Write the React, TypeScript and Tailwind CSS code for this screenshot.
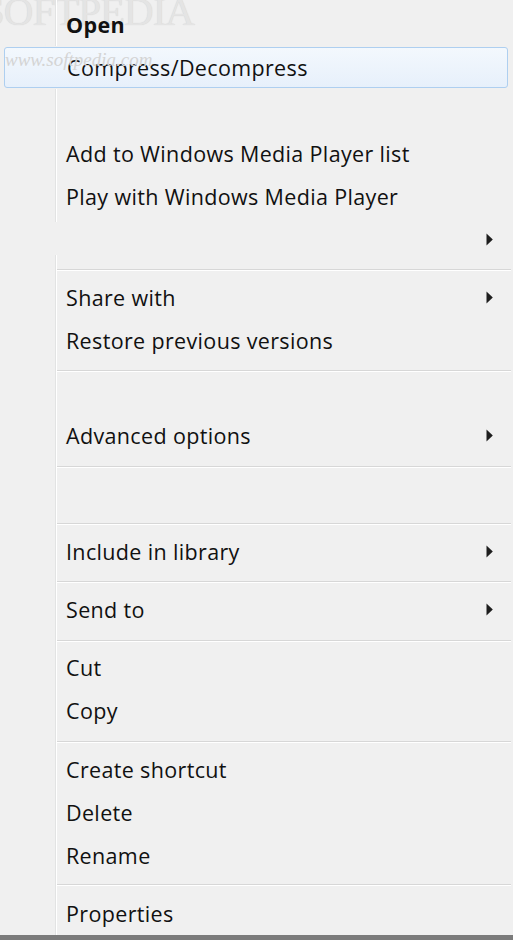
import React from 'react';

type Item = { kind: 'item'; label?: string; bold?: boolean; arrow?: boolean; active?: boolean; h?: string; noLine?: boolean };
type Row = Item | { kind: 'sep' };

const rows: Row[] = [
  { kind: 'item', label: 'Open', bold: true },
  { kind: 'item', label: 'Compress/Decompress', active: true },
  { kind: 'item' },
  { kind: 'item', label: 'Add to Windows Media Player list' },
  { kind: 'item', label: 'Play with Windows Media Player' },
  { kind: 'item', arrow: true, noLine: true, h: 'h-[42px]' },
  { kind: 'sep' },
  { kind: 'item', label: 'Share with', arrow: true },
  { kind: 'item', label: 'Restore previous versions' },
  { kind: 'sep' },
  { kind: 'item', label: 'Advanced options', arrow: true },
  { kind: 'sep' },
  { kind: 'item', h: 'h-[55px]' },
  { kind: 'sep' },
  { kind: 'item', label: 'Include in library', arrow: true },
  { kind: 'sep' },
  { kind: 'item', label: 'Send to', arrow: true },
  { kind: 'sep' },
  { kind: 'item', label: 'Cut' },
  { kind: 'item', label: 'Copy' },
  { kind: 'sep' },
  { kind: 'item', label: 'Create shortcut' },
  { kind: 'item', label: 'Delete' },
  { kind: 'item', label: 'Rename' },
  { kind: 'sep' },
  { kind: 'item', label: 'Properties' },
];

// the gray + white pair of lines that splits the icon gutter from the labels
const GutterLine = () => (
  <>
    <div className="w-px bg-[#e2e3e3]" />
    <div className="w-px bg-white" />
  </>
);

const Arrow = () => (
  <svg width="7" height="13" viewBox="0 0 7 13" className="mr-[18px]">
    <path d="M0.5 0.5 L6.8 6.5 L0.5 12.5 Z" fill="#1e1e1e" />
  </svg>
);

const Separator = () => (
  <div className="flex h-[2px]">
    <div className="w-[55px] shrink-0" />
    <GutterLine />
    <div className="flex flex-1 flex-col">
      <div className="h-px bg-[#d7d7d7]" />
      <div className="h-px bg-white" />
    </div>
  </div>
);

const Spacer: React.FC<{ h: string }> = ({ h }) => (
  <div className={`flex ${h}`}>
    <div className="w-[55px] shrink-0" />
    <GutterLine />
  </div>
);

const MenuItem: React.FC<{ row: Item }> = ({ row }) => {
  const h = row.h ?? 'h-[43px]';
  if (row.active) {
    return (
      <div className={`flex ${h} items-stretch py-px pl-[4px] pr-[3px]`}>
        <div className="flex flex-1 items-center rounded-[3px] border border-[#aecff0] bg-gradient-to-b from-[#f3f8fd] to-[#e7f0fb] pl-[62px]">
          <span className="text-[#111]">{row.label}</span>
        </div>
      </div>
    );
  }
  return (
    <div className={`flex ${h} items-stretch`}>
      <div className="w-[55px] shrink-0" />
      {row.noLine ? (
        <div className="flex w-[2px] flex-col">
          <div className="flex h-[4px]">
            <GutterLine />
          </div>
          <div className="flex-1" />
          <div className="flex h-[5px]">
            <GutterLine />
          </div>
        </div>
      ) : (
        <GutterLine />
      )}
      <div className="flex flex-1 items-center justify-between pl-[9px]">
        <span className={row.bold ? 'font-bold text-[#111]' : 'text-[#111]'}>{row.label ?? ''}</span>
        {row.arrow && <Arrow />}
      </div>
    </div>
  );
};

// extra space above some rows so each lands where the menu puts it
const gapsBefore: Record<number, string> = {
  6: 'h-[9px]',
  7: 'h-[5px]',
  9: 'h-[8px]',
  10: 'h-[42px]',
  11: 'h-[9px]',
  14: 'h-[5px]',
  15: 'h-[8px]',
  16: 'h-[5px]',
  17: 'h-[9px]',
  18: 'h-[4px]',
  20: 'h-[9px]',
  21: 'h-[5px]',
  24: 'h-[7px]',
  25: 'h-[6px]',
};

export default function App() {
  return (
    <div
      className="relative flex h-[940px] w-[513px] flex-col overflow-hidden bg-[#f0f0f0] text-[21.5px] leading-none tracking-[0.35px]"
      style={{ fontFamily: '"Open Sans", "Noto Sans", sans-serif' }}
    >
      {/* softpedia watermark */}
      <div className="pointer-events-none absolute left-[-18px] top-[-9px] select-none font-['Liberation_Serif',serif] text-[41px] tracking-[-1px] text-[#e4e4e4] [text-shadow:0_0_1px_#cfcfcf]">
        SOFTPEDIA
      </div>

      <div className="relative flex flex-1 flex-col pr-[2px]">
        <Spacer h="h-[3px]" />
        {rows.map((row, i) => (
          <React.Fragment key={i}>
            {gapsBefore[i] && <Spacer h={gapsBefore[i]} />}
            {row.kind === 'sep' ? <Separator /> : <MenuItem row={row} />}
          </React.Fragment>
        ))}
        <div className="flex flex-1">
          <div className="w-[55px] shrink-0" />
          <GutterLine />
        </div>
      </div>
      <div className="h-[5px] bg-[#7b7b7b]" />

      <div className="pointer-events-none absolute left-[5px] top-[50px] select-none font-['Liberation_Serif',serif] text-[19px] italic tracking-normal text-[#d4d4d4]">
        www.softpedia.com
      </div>
    </div>
  );
}
